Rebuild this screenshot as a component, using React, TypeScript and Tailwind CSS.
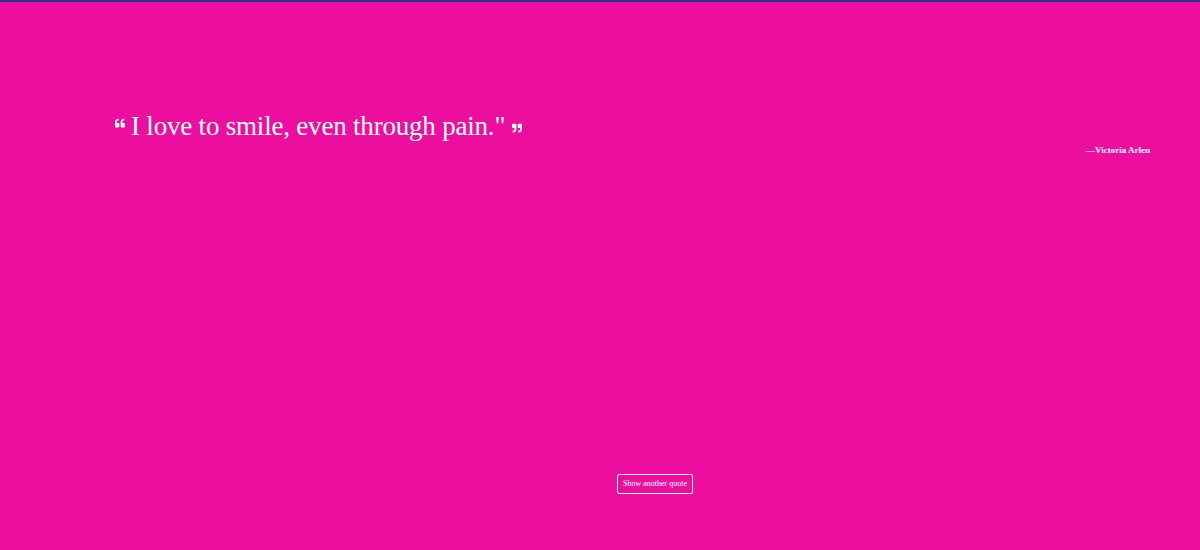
import { FaQuoteLeft, FaQuoteRight } from "react-icons/fa";

export default function App() {
    return (
        <div
            className="w-[1200px] h-[550px] bg-[#eb0e9f] border-t-2 border-[#2b3193] flex flex-col text-white"
            style={{ fontFamily: '"Liberation Serif", "DejaVu Serif", serif' }}
        >
            <div className="pt-[109px] pl-[114px] pr-[50px]">
                <div className="flex items-start">
                    <FaQuoteLeft className="w-[12px] h-[10px] mt-[7px] mr-[5px]" />
                    <p className="text-[27px] leading-[30px] tracking-[-0.2px]">
                        I love to smile, even through pain."
                    </p>
                    <FaQuoteRight className="w-[12px] h-[10px] mt-[12px] ml-[6px]" />
                </div>
                <p className="text-right text-[9px] font-bold mt-[3px]">
                    —Victoria Arlen
                </p>
            </div>
            <div className="flex-1" />
            <div className="flex justify-center pl-[110px] pb-[56px]">
                <button className="border border-white rounded-[2px] px-[5px] h-[20px] text-[8px]">
                    Show another quote
                </button>
            </div>
        </div>
    );
}
